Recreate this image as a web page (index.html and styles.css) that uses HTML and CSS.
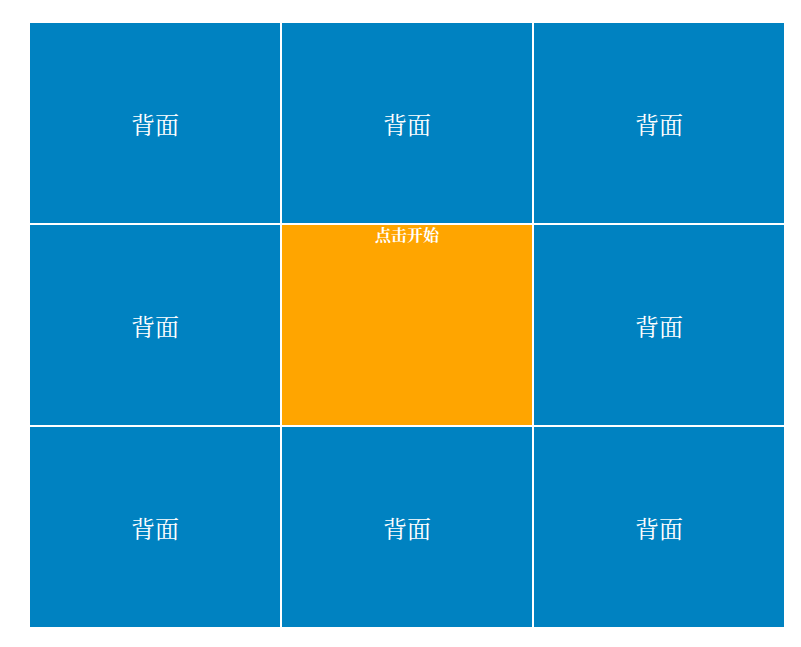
FILE: index.html
```html
<!DOCTYPE html>
<html lang="zh-CN">

<head>
    <meta charset="UTF-8">
    <meta name="viewport" content="width=device-width, initial-scale=1.0">
    <title>翻牌抽奖</title>
    <link rel="stylesheet" href="styles.css">
</head>

<body>
    <div id="box">
        <div class="card">背面</div>
        <div class="card">背面</div>
        <div class="card">背面</div>
        <div class="card">背面</div>
        <!-- 开始按钮 -->
        <div class="start">点击开始</div>
        <div class="card">背面</div>
        <div class="card">背面</div>
        <div class="card">背面</div>
        <div class="card">背面</div>
    </div>
</body>

</html>
```

FILE: styles.css
```css
body {
    margin: 0;
    padding: 23px 0 0 30px;
    font-family: "Noto Serif CJK SC", "Liberation Serif", "Noto Sans CJK SC", serif;
    background-color: #fff;
}

#box {
    width: 754px;
    display: grid;
    grid-template-columns: repeat(3, 250px);
    grid-template-rows: repeat(3, 200px);
    gap: 2px;
}

.card {
    display: flex;
    align-items: center;
    justify-content: center;
    background-color: #0082c1;
    color: #fff;
    font-size: 24px;
}

.start {
    background-color: #ffa500;
    color: #fff;
    font-size: 16px;
    font-weight: bold;
    text-align: center;
    line-height: 20px;
}
```
